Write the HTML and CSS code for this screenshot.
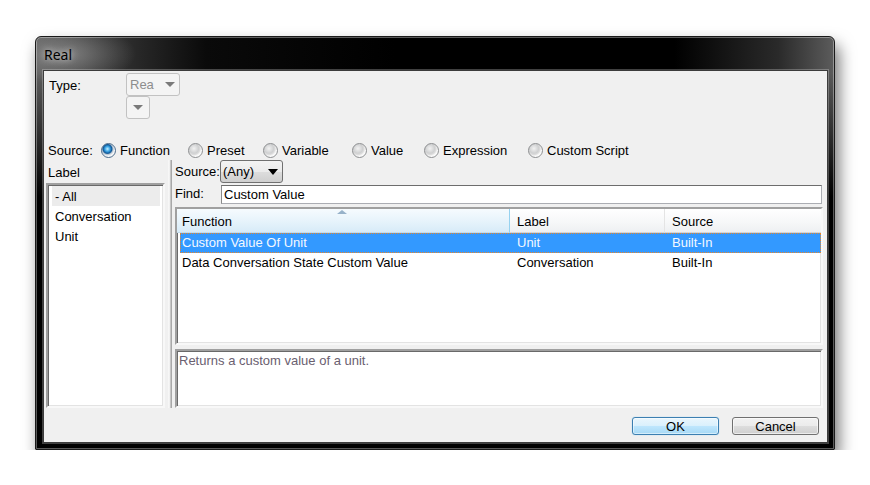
FILE: index.html
```html
<!DOCTYPE html>
<html>
<head>
<meta charset="utf-8">
<link rel="stylesheet" href="styles.css">
</head>
<body>
<div class="window">
  <div class="titlebar"><span class="title">Real</span></div>
  <div class="client">
    <div class="type-row">
      <div class="type-label">Type:</div>
      <div class="type-combos">
        <div class="dcombo wide"><span>Rea</span><i class="garrow"></i></div>
        <div class="dcombo narrow"><i class="garrow"></i></div>
      </div>
    </div>
    <div class="source-row">
      <div class="src-label">Source:</div>
      <label class="opt w87"><span class="radio on"></span>Function</label>
      <label class="opt w75"><span class="radio"></span>Preset</label>
      <label class="opt w89"><span class="radio"></span>Variable</label>
      <label class="opt w72"><span class="radio"></span>Value</label>
      <label class="opt w104"><span class="radio"></span>Expression</label>
      <label class="opt"><span class="radio"></span>Custom Script</label>
    </div>
    <div class="main">
      <div class="left">
        <div class="left-head">Label</div>
        <div class="listbox sunken">
          <div class="item sel">- All</div>
          <div class="item">Conversation</div>
          <div class="item">Unit</div>
        </div>
      </div>
      <div class="splitter"></div>
      <div class="right">
        <div class="r-source">
          <div class="r-label">Source:</div>
          <div class="combo"><span>(Any)</span><i class="barrow"></i></div>
        </div>
        <div class="r-find">
          <div class="f-label">Find:</div>
          <div class="input">Custom Value</div>
        </div>
        <div class="table sunken">
          <div class="thead">
            <div class="th c1 sorted">Function<i class="sort"></i></div>
            <div class="th c2">Label</div>
            <div class="th c3">Source</div>
          </div>
          <div class="tr selected">
            <div class="td d1">Custom Value Of Unit</div>
            <div class="td d2">Unit</div>
            <div class="td d3">Built-In</div>
          </div>
          <div class="tr">
            <div class="td d1">Data Conversation State Custom Value</div>
            <div class="td d2">Conversation</div>
            <div class="td d3">Built-In</div>
          </div>
        </div>
        <div class="desc sunken">Returns a custom value of a unit.</div>
      </div>
    </div>
    <div class="buttons">
      <div class="btn default">OK</div>
      <div class="btn">Cancel</div>
    </div>
  </div>
</div>
</body>
</html>
```
FILE: styles.css
```css
* { box-sizing: border-box; }
html, body { margin: 0; padding: 0; background: #fff; }
body {
  padding: 36px 0 0 35px;
  font-family: "Liberation Sans", Arial, sans-serif;
  font-size: 13px;
  color: #000;
}
.window {
  width: 800px;
  height: 414px;
  border: 1px solid #1a1a1a;
  border-radius: 6px 6px 1px 1px;
  padding: 0 6px 6px 7px;
  background:
    radial-gradient(ellipse 70px 30px at 30px 17px, rgba(170,170,170,0.55), rgba(120,120,120,0) 100%),
    linear-gradient(to bottom, rgba(0,0,0,0) 0, rgba(0,0,0,0) 36px, #000 160px),
    linear-gradient(to right, #5e5e5e 0px, #3a3a3a 60px, #0a0a0a 170px, #000 45%, #000 80%, #2a2a2a 93%, #5c5c5c 100%);
  box-shadow: inset 0 0 0 1px rgba(255,255,255,0.35), 4px 9px 16px rgba(0,0,0,0.55);
}
.titlebar {
  height: 33px;
  padding-left: 1px;
  display: flex;
  align-items: center;
}
.title {
  font-family: "Noto Sans", "Open Sans", sans-serif;
  font-size: 14px;
  color: #000;
  padding-top: 1px;
  text-shadow: 0 0 6px rgba(255,255,255,0.6), 0 0 10px rgba(255,255,255,0.4);
}
.client {
  width: 785px;
  height: 373px;
  background: #f0f0f0;
  border: 1px solid #3c3c3c;
  box-shadow: 0 0 0 1px rgba(255,255,255,0.25);
}
/* type row */
.type-row { display: flex; margin-top: 2px; padding-left: 5px; }
.type-label { width: 77px; line-height: 23px; padding-top: 1px; }
.type-combos { display: flex; flex-direction: column; align-items: flex-start; }
.dcombo {
  height: 23px;
  border: 1px solid #c2c2c2;
  border-radius: 3px;
  background: #f4f4f4;
  color: #8d8d8d;
  display: flex;
  align-items: center;
  padding-left: 3px;
}
.dcombo.wide { width: 54px; }
.dcombo.narrow { width: 24px; justify-content: center; padding-left: 0; }
.dcombo.wide .garrow { margin-left: 11px; }
.garrow {
  width: 0; height: 0;
  border-left: 5px solid transparent;
  border-right: 5px solid transparent;
  border-top: 5px solid #7a7a7a;
  display: block;
}
/* source radios */
.source-row {
  display: flex;
  align-items: center;
  height: 18px;
  margin-top: 22px;
  margin-bottom: 1px;
  padding-left: 4px;
}
.src-label { width: 53px; }
.opt { display: flex; align-items: center; }
.w87 { width: 87px; } .w75 { width: 75px; } .w89 { width: 89px; } .w72 { width: 72px; } .w104 { width: 104px; }
.radio {
  width: 15px; height: 15px;
  border-radius: 50%;
  border: 1px solid #8c8e90;
  margin-right: 4px;
  background: radial-gradient(circle at 38% 35%, #f2f2f2 0, #cfd0d1 40%, #dcdcdc 52%, #f4f4f4 62%, #ffffff 75%);
}
.radio.on {
  border-color: #4a6a8a;
  background: radial-gradient(circle at 42% 38%, #c8f0ff 0, #3ea7e6 22%, #0c5596 40%, #b9c6d3 50%, #eef1f4 62%, #ffffff 75%);
}
/* main */
.main { display: flex; height: 248px; }
.left { width: 124px; }
.left-head { height: 23px; line-height: 23px; padding-left: 4px; padding-top: 1px; }
.sunken {
  border-style: solid;
  border-width: 2px;
  border-color: #a0a0a0 #f8f8f8 #f8f8f8 #a0a0a0;
  box-shadow: inset 1px 1px 0 #696969, inset -1px -1px 0 #e3e3e3;
  background: #fff;
}
.listbox { margin-left: 2px; width: 119px; height: 225px; padding: 1px 3px 0 4px; }
.item { height: 20px; line-height: 20px; padding-left: 3px; padding-top: 1px; }
.item.sel { background: #ececec; }
.splitter {
  width: 4px;
  background: linear-gradient(to right, #f0f0f0 0, #fdfdfd 1px, #e4e4e4 2px, #a8a8a8 3px, #a8a8a8 4px);
}
.right { flex: 1; padding: 0 4px 0 3px; display: flex; flex-direction: column; }
.r-source { display: flex; align-items: center; height: 23px; }
.r-label { width: 45px; }
.combo {
  width: 63px; height: 23px;
  border: 1px solid #707070;
  border-radius: 3px;
  background: linear-gradient(#f3f3f3, #ebebeb 50%, #dddddd 51%, #cfcfcf);
  display: flex; align-items: center;
  padding-left: 2px;
}
.barrow {
  width: 0; height: 0; display: block;
  border-left: 5px solid transparent;
  border-right: 5px solid transparent;
  border-top: 6px solid #000;
  margin-left: 14px;
}
.r-find { display: flex; align-items: flex-end; height: 21px; }
.f-label { width: 46px; line-height: 20px; }
.input {
  width: 601px; height: 19px;
  border: 1px solid #abadb3;
  border-top-color: #6d6d6d;
  border-left-color: #8a8a8a;
  background: #fff;
  line-height: 17px;
  padding-left: 2px;
}
.table { margin-top: 3px; height: 138px; }
.thead { display: flex; height: 24px; }
.th {
  line-height: 23px;
  border-bottom: 1px solid #d5d5d5;
  border-right: 1px solid #e4e4e4;
  background: linear-gradient(#ffffff, #f6f7f8 60%, #eef0f2);
  padding-left: 7px;
  padding-top: 1px;
  position: relative;
}
.th.c1 { width: 333px; padding-left: 5px; }
.th.c2 { width: 155px; }
.th.c3 { flex: 1; border-right: none; }
.th.sorted {
  background: linear-gradient(#f6fbfe, #e6f3fb 55%, #d7ebf8);
  border-right: 1px solid #96d2f0;
  border-bottom-color: #c3dcec;
}
.sort {
  position: absolute;
  left: 160px; top: 1px;
  width: 0; height: 0;
  border-left: 5px solid transparent;
  border-right: 5px solid transparent;
  border-bottom: 4px solid #97b2c9;
}
.tr { display: flex; height: 20px; margin-left: 3px; line-height: 20px; }
.tr.selected { background: #3399ff; color: #f4f8ff; outline: 1px dotted #e8862a; outline-offset: -1px; }
.td.d1 { width: 330px; padding-left: 2px; }
.td.d2 { width: 155px; padding-left: 7px; }
.td.d3 { flex: 1; padding-left: 7px; }
.desc {
  margin-top: 4px;
  height: 59px;
  padding: 2px 2px;
  color: #6a6070;
  line-height: 16px;
}
.buttons {
  display: flex;
  justify-content: flex-end;
  gap: 13px;
  margin-top: 9px;
  padding-right: 8px;
}
.btn {
  width: 87px; height: 18px;
  border: 1px solid #707070;
  border-radius: 3px;
  background: linear-gradient(#f2f2f2, #ebebeb 50%, #dddddd 51%, #cfcfcf);
  text-align: center;
  line-height: 17px;
  box-shadow: inset 0 0 0 1px rgba(255,255,255,0.6);
}
.btn.default {
  border-color: #3c7fb1;
  background: linear-gradient(#eaf6fd, #d9f0fc 50%, #bee6fd 51%, #a7d9f5);
  box-shadow: inset 0 0 0 1px rgba(255,255,255,0.5), 0 0 1px #6fc2ef;
}
```
